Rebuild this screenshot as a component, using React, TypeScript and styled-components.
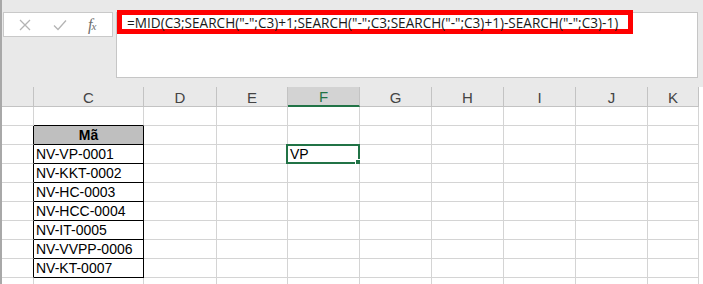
import React from 'react';
import styled, { createGlobalStyle } from 'styled-components';

const GlobalStyle = createGlobalStyle`
  html, body {
    margin: 0;
    padding: 0;
    background: #ffffff;
  }
`;

const Sheet = styled.div`
  width: 703px;
  height: 284px;
  overflow: hidden;
  background: #e9e9e9;
  border-left: 2px solid #a8a8a8;
  box-sizing: border-box;
  font-family: 'Liberation Sans', Arial, sans-serif;
`;

const FormulaBar = styled.div`
  display: flex;
  align-items: flex-start;
  gap: 3px;
  padding: 12px 0 0 1px;
  height: 87px;
  box-sizing: border-box;
`;

const ActionBox = styled.div`
  width: 110px;
  height: 25px;
  box-sizing: border-box;
  background: #ffffff;
  border: 1px solid #c9c9c9;
  display: flex;
  align-items: center;
  padding-left: 14px;
  gap: 21px;
`;

const IconSlot = styled.span`
  width: 14px;
  height: 14px;
  display: flex;
  align-items: center;
  justify-content: center;
`;

const Fx = styled.span`
  font-family: 'Liberation Serif', 'Times New Roman', serif;
  font-style: italic;
  font-size: 16px;
  color: #6f6f6f;
  letter-spacing: -1px;

  sub {
    font-size: 11px;
    vertical-align: 0;
  }
`;

const FormulaBox = styled.div`
  position: relative;
  width: 582px;
  height: 66px;
  box-sizing: border-box;
  background: #ffffff;
  border: 1px solid #c6c6c6;
`;

const Highlight = styled.div`
  position: absolute;
  left: 0;
  top: -3px;
  width: 516px;
  height: 24px;
  box-sizing: border-box;
  border: 5px solid #ff0000;
  display: flex;
  align-items: center;
  padding: 1px 0 0 5px;
  font-family: 'Open Sans', 'Noto Sans', sans-serif;
  font-size: 13.6px;
  color: #1a1a1a;
  white-space: nowrap;
`;

const Grid = styled.div`
  display: grid;
  grid-template-columns: 32px 110px 73px 71px 72px 72px 72px 72px 72px 51px;
  grid-auto-rows: 19px;
  grid-template-rows: 20px;
  background: #ffffff;
`;

const HeadCell = styled.div<{ $active?: boolean }>`
  background: ${(p) => (p.$active ? '#d3d3d3' : '#e9e9e9')};
  color: ${(p) => (p.$active ? '#217346' : '#444444')};
  border-right: 1px solid #c3c3c3;
  border-bottom: ${(p) => (p.$active ? '2px solid #217346' : '1px solid #c3c3c3')};
  font-size: 15px;
  display: flex;
  align-items: center;
  justify-content: center;
  box-sizing: border-box;
  padding-top: 1px;
`;

const Cell = styled.div<{ $right?: boolean; $bottom?: boolean; $head?: boolean }>`
  position: relative;
  box-sizing: border-box;
  border-right: 1px solid ${(p) => (p.$right ? '#000000' : '#d4d4d4')};
  border-bottom: 1px solid ${(p) => (p.$bottom ? '#000000' : '#d4d4d4')};
  background: ${(p) => (p.$head ? '#bfbfbf' : '#ffffff')};
  font-size: 14px;
  font-weight: ${(p) => (p.$head ? 700 : 400)};
  color: #000000;
  display: flex;
  align-items: center;
  justify-content: ${(p) => (p.$head ? 'center' : 'flex-start')};
  padding-left: ${(p) => (p.$head ? 0 : 2)}px;
  white-space: nowrap;
`;

const Selection = styled.div`
  position: absolute;
  left: -2px;
  top: -1px;
  right: -1px;
  bottom: -1px;
  border: 2px solid #217346;
  pointer-events: none;

  &::after {
    content: '';
    position: absolute;
    right: -4px;
    bottom: -4px;
    width: 5px;
    height: 5px;
    background: #217346;
    border: 1px solid #ffffff;
  }
`;

const columns = ['', 'C', 'D', 'E', 'F', 'G', 'H', 'I', 'J', 'K'];

const codes = [
  '',
  'Mã',
  'NV-VP-0001',
  'NV-KKT-0002',
  'NV-HC-0003',
  'NV-HCC-0004',
  'NV-IT-0005',
  'NV-VVPP-0006',
  'NV-KT-0007',
  '',
];

const formula = '=MID(C3;SEARCH("-";C3)+1;SEARCH("-";C3;SEARCH("-";C3)+1)-SEARCH("-";C3)-1)';

const CancelIcon = () => (
  <svg width="12" height="12" viewBox="0 0 12 12">
    <path d="M1 1 L11 11 M11 1 L1 11" stroke="#b4b4b4" strokeWidth="1.3" fill="none" />
  </svg>
);

const CheckIcon = () => (
  <svg width="14" height="12" viewBox="0 0 14 12">
    <path d="M1 6.5 L5 10.5 L13 1.5" stroke="#b4b4b4" strokeWidth="1.3" fill="none" />
  </svg>
);

const App = () => {
  return (
    <>
      <GlobalStyle />
      <Sheet>
        <FormulaBar>
          <ActionBox>
            <IconSlot>
              <CancelIcon />
            </IconSlot>
            <IconSlot>
              <CheckIcon />
            </IconSlot>
            <Fx>
              f<sub>x</sub>
            </Fx>
          </ActionBox>
          <FormulaBox>
            <Highlight>{formula}</Highlight>
          </FormulaBox>
        </FormulaBar>
        <Grid>
          {columns.map((c) => (
            <HeadCell key={c || 'corner'} $active={c === 'F'}>
              {c}
            </HeadCell>
          ))}
          {codes.map((code, r) => {
            const inTable = r >= 1 && r <= 8;
            return columns.map((c, ci) => {
              const key = `${r}-${ci}`;
              if (ci === 0) return <Cell key={key} $right={inTable} />;
              if (ci === 1)
                return (
                  <Cell key={key} $right={inTable} $bottom={r <= 8} $head={r === 1}>
                    {code}
                  </Cell>
                );
              if (c === 'F' && r === 2)
                return (
                  <Cell key={key}>
                    VP
                    <Selection />
                  </Cell>
                );
              return <Cell key={key} />;
            });
          })}
        </Grid>
      </Sheet>
    </>
  );
};

export default App;
